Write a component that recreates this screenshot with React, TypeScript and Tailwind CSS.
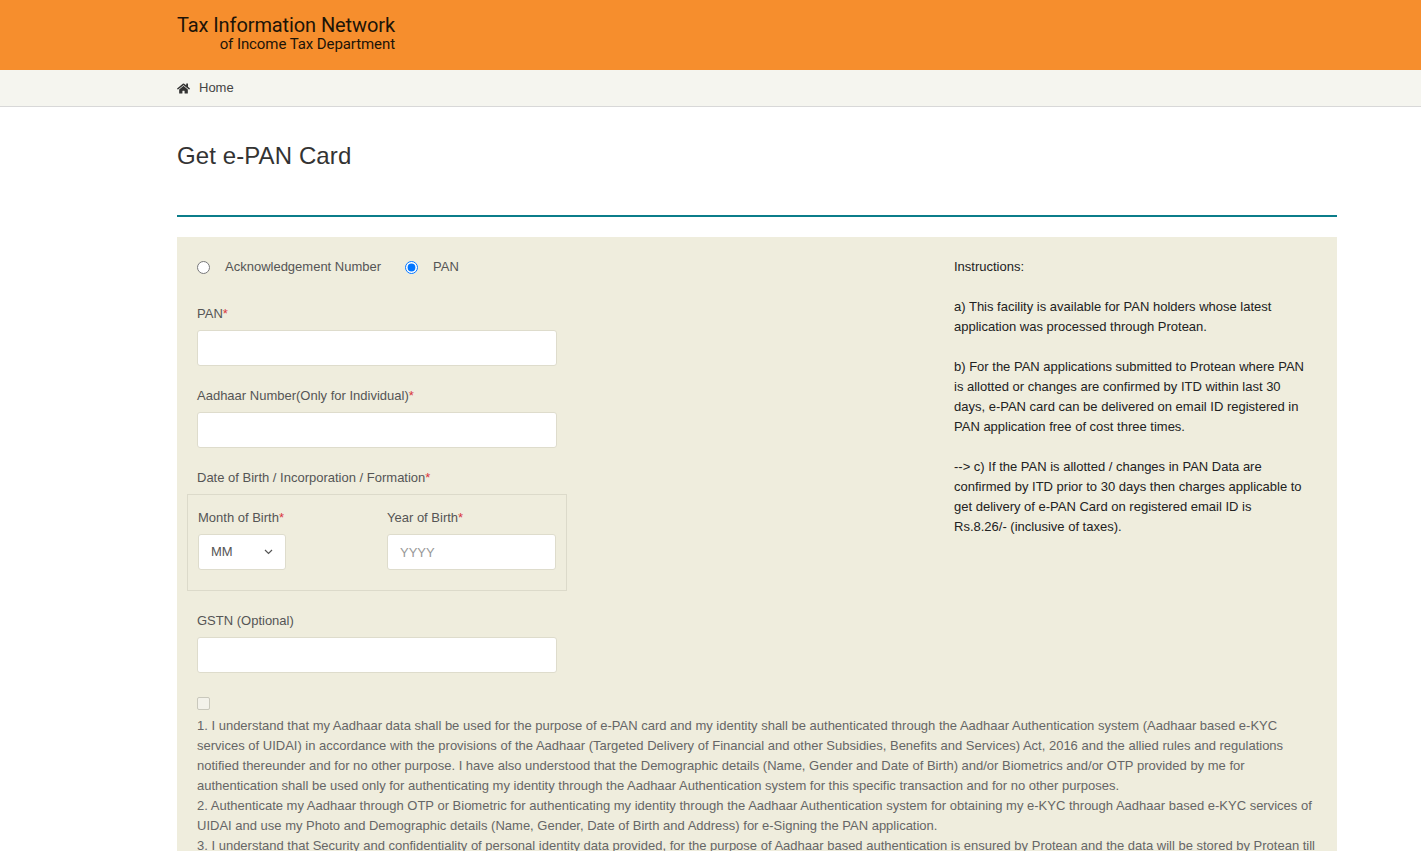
import { FaHome } from 'react-icons/fa';

const Star = () => <span className="text-[#d9363e]">*</span>;

function Field({ label, required }: { label: string; required?: boolean }) {
  return (
    <div className="w-[360px]">
      <label className="block h-[20px] text-[13px] leading-[22px] text-[#555]">
        {label}
        {required && <Star />}
      </label>
      <input
        type="text"
        className="mt-[7px] block h-[36px] w-full rounded-[3px] border border-[#dedccc] bg-white"
      />
    </div>
  );
}

export default function App() {
  return (
    <div className="h-[851px] overflow-hidden bg-white font-['Liberation_Sans',Arial,sans-serif]">
      <header className="h-[70px] bg-[#f68e2d]">
        <div className="ml-[177px] flex h-full w-[1160px] flex-col items-start pt-[13px]">
          <div className="flex w-[218px] flex-col items-end font-['Roboto',sans-serif] text-[#1c1408]">
            <span className="whitespace-nowrap text-[20px] leading-[24px] tracking-[-0.1px]">Tax Information Network</span>
            <span className="whitespace-nowrap text-[15px] leading-[15px] tracking-[-0.08px]">of Income Tax Department</span>
          </div>
        </div>
      </header>

      <nav className="h-[37px] border-b border-[#d8d8d8] bg-[#f5f5ef]">
        <div className="ml-[177px] flex h-full w-[1160px] items-center">
          <FaHome className="text-[13px] text-[#333]" />
          <a className="ml-[9px] text-[13px] text-[#444]">Home</a>
        </div>
      </nav>

      <main className="ml-[177px] w-[1160px]">
        <h1 className="pt-[34px] text-[24px] leading-[30px] tracking-[0.1px] text-[#333]">Get e-PAN Card</h1>
        <div className="mt-[44px] h-[2px] bg-[#0b7d8a]" />

        <section className="mt-[20px] flex bg-[#efeddd] px-[20px] pt-[20px]">
          <div className="w-[1120px] shrink-0">
            <div className="flex">
              <div className="w-[757px]">
                <div className="flex h-[20px] items-center text-[13px] text-[#555]">
                  <input type="radio" name="kind" className="m-0 h-[13px] w-[13px]" />
                  <span className="ml-[15px]">Acknowledgement Number</span>
                  <input type="radio" name="kind" defaultChecked className="m-0 ml-[24px] h-[13px] w-[13px]" />
                  <span className="ml-[15px]">PAN</span>
                </div>

                <div className="mt-[26px]">
                  <Field label="PAN" required />
                </div>
                <div className="mt-[19px]">
                  <Field label="Aadhaar Number(Only for Individual)" required />
                </div>

                <label className="mt-[19px] block h-[20px] text-[13px] leading-[22px] text-[#555]">
                  Date of Birth / Incorporation / Formation
                  <Star />
                </label>

                <fieldset className="-ml-[10px] mt-[7px] flex h-[97px] w-[380px] border border-[#dcdaca] pl-[10px] pt-[12px]">
                  <div className="w-[189px]">
                    <label className="block h-[20px] text-[13px] leading-[22px] text-[#555]">
                      Month of Birth
                      <Star />
                    </label>
                    <div className="mt-[7px] flex h-[36px] w-[88px] items-center justify-between rounded-[3px] border border-[#dedccc] bg-white pl-[12px] pr-[12px] text-[13px] text-[#555]">
                      <span>MM</span>
                      <svg width="9" height="6" viewBox="0 0 9 6" fill="none" stroke="#555" strokeWidth="1.2">
                        <path d="M1 1l3.5 3.5L8 1" />
                      </svg>
                    </div>
                  </div>
                  <div>
                    <label className="block h-[20px] text-[13px] leading-[22px] text-[#555]">
                      Year of Birth
                      <Star />
                    </label>
                    <input
                      type="text"
                      placeholder="YYYY"
                      className="mt-[7px] block h-[36px] w-[169px] rounded-[3px] border border-[#dedccc] bg-white px-[12px] text-[13px] placeholder:text-[#999]"
                    />
                  </div>
                </fieldset>

                <div className="mt-[19px]">
                  <Field label="GSTN (Optional)" />
                </div>
              </div>

              <div className="w-[352px] text-[13px] leading-[20px] text-[#222]">
                <p>Instructions:</p>
                <p className="mt-[20px]">
                  a) This facility is available for PAN holders whose latest application was processed through Protean.
                </p>
                <p className="mt-[20px]">
                  b) For the PAN applications submitted to Protean where PAN is allotted or changes are confirmed by ITD within last 30 days, e-PAN card can be delivered on email ID registered in PAN application free of cost three times.
                </p>
                <p className="mt-[20px]">
                  {'--> c) If the PAN is allotted / changes in PAN Data are confirmed by ITD prior to 30 days then charges applicable to get delivery of e-PAN Card on registered email ID is Rs.8.26/- (inclusive of taxes).'}
                </p>
              </div>
            </div>

            <div className="mt-[24px] h-[13px] w-[13px] rounded-[2px] border border-[#c9c8bc] bg-[#f3f2ea]" />
            <div className="mt-[6px] text-[13px] leading-[20px] text-[#666]">
              <p>
                1. I understand that my Aadhaar data shall be used for the purpose of e-PAN card and my identity shall be authenticated through the Aadhaar Authentication system (Aadhaar based e-KYC services of UIDAI) in accordance with the provisions of the Aadhaar (Targeted Delivery of Financial and other Subsidies, Benefits and Services) Act, 2016 and the allied rules and regulations notified thereunder and for no other purpose. I have also understood that the Demographic details (Name, Gender and Date of Birth) and/or Biometrics and/or OTP provided by me for authentication shall be used only for authenticating my identity through the Aadhaar Authentication system for this specific transaction and for no other purposes.
              </p>
              <p>
                2. Authenticate my Aadhaar through OTP or Biometric for authenticating my identity through the Aadhaar Authentication system for obtaining my e-KYC through Aadhaar based e-KYC services of UIDAI and use my Photo and Demographic details (Name, Gender, Date of Birth and Address) for e-Signing the PAN application.
              </p>
              <p>
                3. I understand that Security and confidentiality of personal identity data provided, for the purpose of Aadhaar based authentication is ensured by Protean and the data will be stored by Protean till such time as mentioned in guidelines from UIDAI from time to time.
              </p>
            </div>
          </div>
        </section>
      </main>
    </div>
  );
}
